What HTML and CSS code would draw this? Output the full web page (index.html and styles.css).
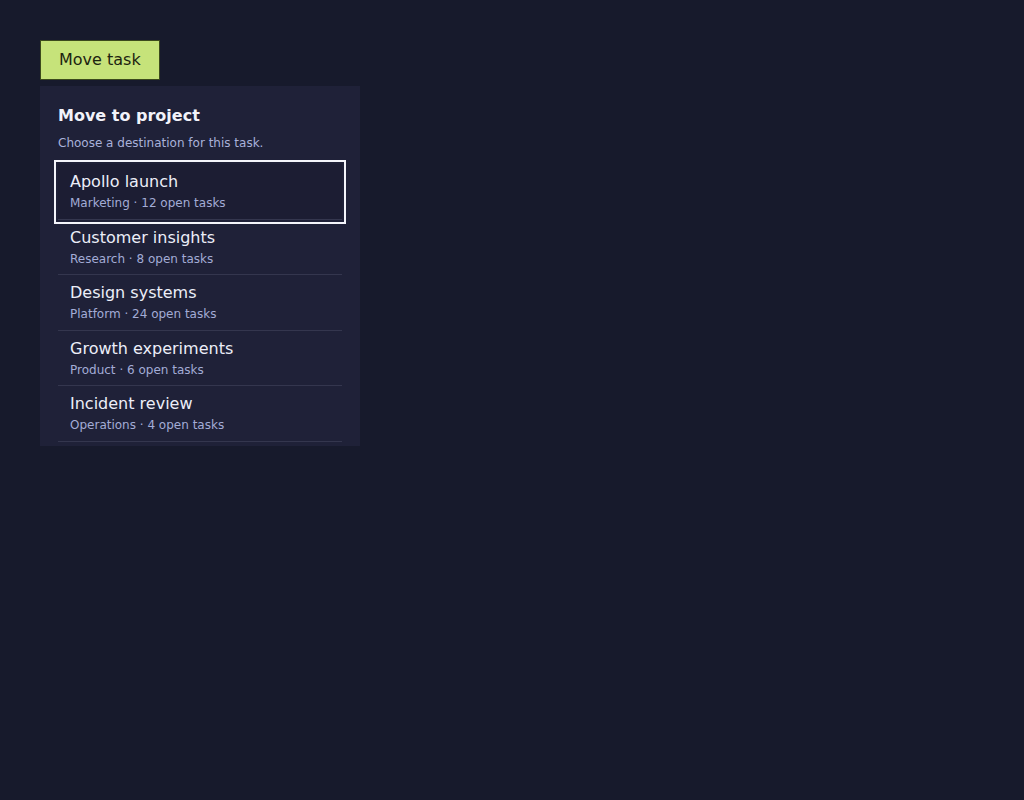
FILE: index.html
```html
<!DOCTYPE html>
<html lang="en">
<head>
<meta charset="utf-8">
<title>Move task</title>
<link rel="stylesheet" href="styles.css">
</head>
<body>
<main class="stage">
  <button class="trigger" type="button">Move task</button>
  <section class="popover" aria-label="Move to project">
    <h2 class="popover-title">Move to project</h2>
    <p class="popover-hint">Choose a destination for this task.</p>
    <ul class="project-list">
      <li class="project is-active">
        <span class="project-name">Apollo launch</span>
        <span class="project-meta">Marketing · 12 open tasks</span>
      </li>
      <li class="project">
        <span class="project-name">Customer insights</span>
        <span class="project-meta">Research · 8 open tasks</span>
      </li>
      <li class="project">
        <span class="project-name">Design systems</span>
        <span class="project-meta">Platform · 24 open tasks</span>
      </li>
      <li class="project">
        <span class="project-name">Growth experiments</span>
        <span class="project-meta">Product · 6 open tasks</span>
      </li>
      <li class="project">
        <span class="project-name">Incident review</span>
        <span class="project-meta">Operations · 4 open tasks</span>
      </li>
    </ul>
  </section>
</main>
</body>
</html>
```

FILE: styles.css
```css
html, body {
  margin: 0;
  padding: 0;
  background: #171a2c;
  font-family: "DejaVu Sans", sans-serif;
}

.stage {
  padding: 40px;
  display: flex;
  flex-direction: column;
  align-items: flex-start;
  gap: 6px;
}

.trigger {
  font-family: inherit;
  font-size: 16px;
  line-height: 20px;
  padding: 9px 18px;
  background: #c6e37a;
  color: #1d2410;
  border: 1px solid #3c4a1c;
  border-radius: 0;
  cursor: pointer;
}

.popover {
  width: 320px;
  box-sizing: border-box;
  background: #1f2138;
  padding: 19px 18px 4px;
}

.popover-title {
  margin: 0;
  font-size: 16px;
  font-weight: bold;
  line-height: 22px;
  color: #f2f3fa;
}

.popover-hint {
  margin: 7px 0 12px;
  font-size: 12px;
  line-height: 18px;
  color: #a9b1da;
}

.project-list {
  list-style: none;
  margin: 0;
  padding: 0;
}

.project {
  display: flex;
  flex-direction: column;
  gap: 3px;
  padding: 7px 12px 6.5px;
  border-bottom: 1px solid #34364e;
}

.project.is-active {
  outline: 2px solid #f4f5fb;
  outline-offset: 2px;
  background: #1c1d33;
}

.project-name {
  font-size: 16px;
  line-height: 21px;
  color: #eceef8;
}

.project-meta {
  font-size: 12px;
  line-height: 17px;
  color: #a3acd6;
}
```
